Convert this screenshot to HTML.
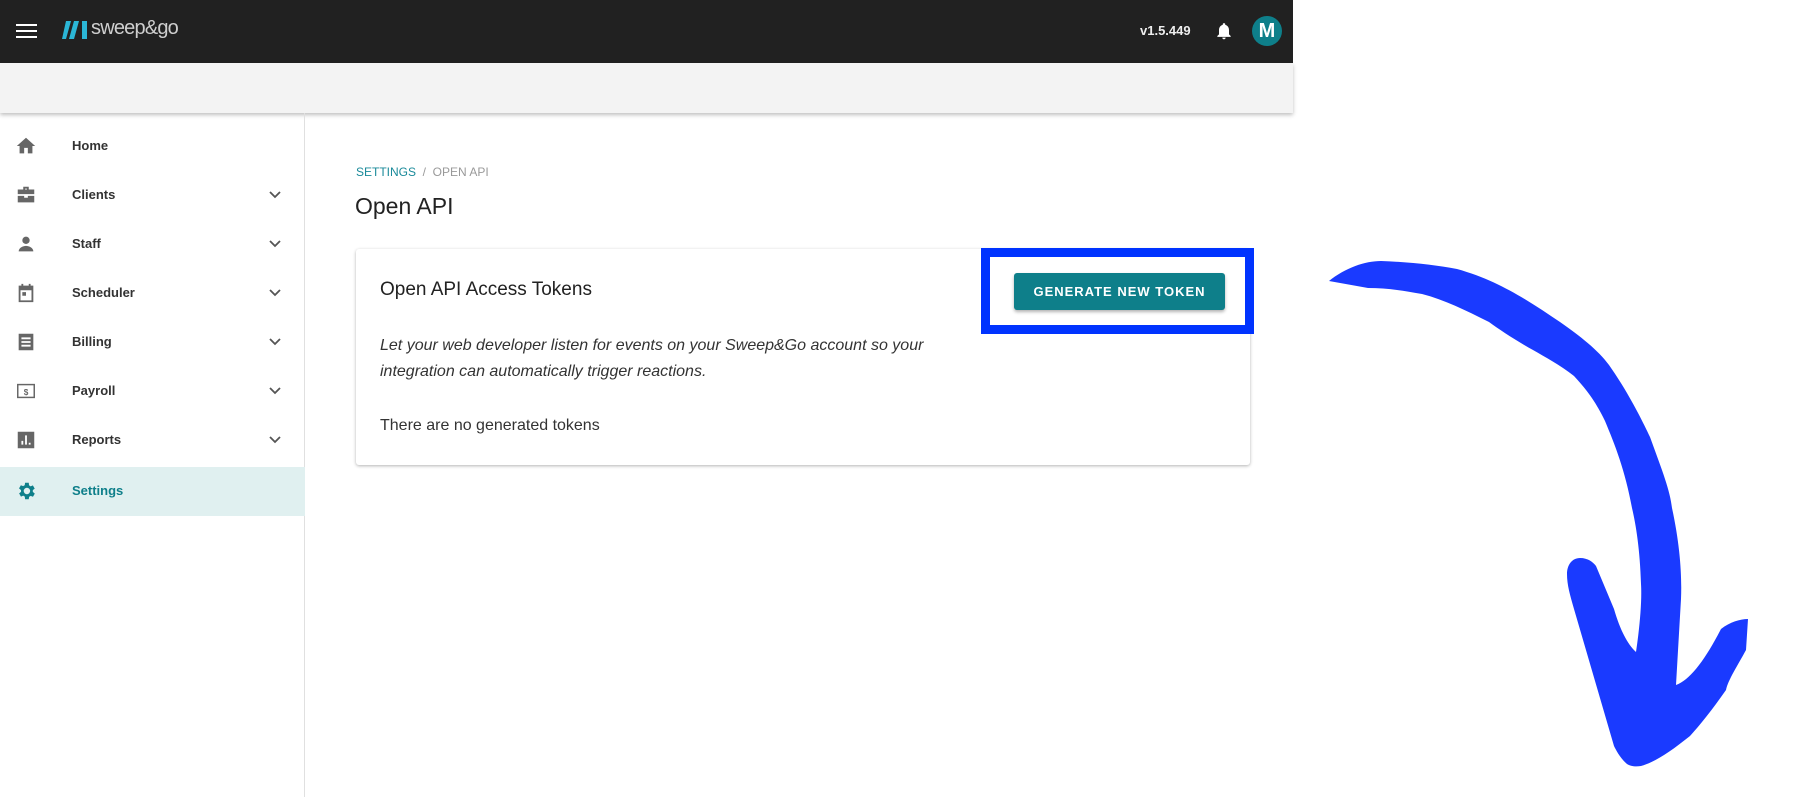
<!DOCTYPE html>
<html><head><meta charset="utf-8"><style>
*{box-sizing:border-box;margin:0;padding:0}
body{width:1800px;height:797px;background:#fff;font-family:"Liberation Sans",sans-serif;position:relative;overflow:hidden}
.top{position:absolute;left:0;top:0;width:1293px;height:63px;background:#212121}
.sub{position:absolute;left:0;top:63px;width:1293px;height:50px;background:#f3f3f3;box-shadow:0 2px 4px rgba(0,0,0,.25)}
.side{position:absolute;left:0;top:113px;width:305px;height:684px;border-right:1px solid #e0e0e0}
.item{position:absolute;left:0;width:305px;height:49px;font-size:13px;font-weight:bold;color:#333}
.item span{position:absolute;left:72px;top:16px}
.item svg.ic{position:absolute;left:15px;top:13px}
.item svg.ch{position:absolute;left:268px;top:17px}
.act{background:#e0f0f0;color:#0e7f8a}
</style></head><body>
<div class="top">
 <div style="position:absolute;left:16px;top:24px;width:21px;height:2px;background:#fff;box-shadow:0 6px 0 #fff,0 12px 0 #fff"></div>
 <svg style="position:absolute;left:62px;top:21px" width="26" height="18"><path d="M4 0h5l-5 18h-4zM12 0h5l-5 18h-5zM20 0h5v18h-5z" fill="#2bb6d6"/></svg>
 <div style="position:absolute;left:91px;top:17px;color:#cfcfcf;font-size:20px;letter-spacing:-.8px">sweep&amp;go</div>
 <div style="position:absolute;left:1140px;top:23px;color:#eee;font-size:13px;font-weight:bold">v1.5.449</div>
 <svg style="position:absolute;left:1214px;top:19px" width="20" height="24" viewBox="0 0 24 24"><path fill="#fff" d="M12 22c1.1 0 2-.9 2-2h-4a2 2 0 002 2zm6-6v-5c0-3.1-1.6-5.6-4.5-6.3V4a1.5 1.5 0 00-3 0v.7C7.6 5.4 6 7.9 6 11v5l-2 2v1h16v-1z"/></svg>
 <div style="position:absolute;left:1252px;top:16px;width:30px;height:30px;border-radius:50%;background:#0e7f8a;color:#fff;font-weight:bold;font-size:20px;text-align:center;line-height:30px">M</div>
</div>
<div class="sub"></div>
<div class="side">
 <div class="item" style="top:9px"><svg class="ic" width="22" height="22" viewBox="0 0 24 24"><path fill="#666" d="M10 20v-6h4v6h5v-8h3L12 3 2 12h3v8z"/></svg><span>Home</span></div>
 <div class="item" style="top:58px"><svg class="ic" width="22" height="22" viewBox="0 0 24 24"><path fill="#666" d="M9 3h6v3h6v5H3V6h6zm2 3h2V5h-2zM3 13h7v2h4v-2h7v7H3z"/></svg><span>Clients</span><svg class="ch" width="14" height="14" viewBox="0 0 14 14"><path d="M2 4l5 5 5-5" stroke="#555" stroke-width="1.8" fill="none"/></svg></div>
 <div class="item" style="top:107px"><svg class="ic" width="22" height="22" viewBox="0 0 24 24"><circle cx="12" cy="8" r="4" fill="#666"/><path fill="#666" d="M4 20c0-4 5-6 8-6s8 2 8 6z"/></svg><span>Staff</span><svg class="ch" width="14" height="14" viewBox="0 0 14 14"><path d="M2 4l5 5 5-5" stroke="#555" stroke-width="1.8" fill="none"/></svg></div>
 <div class="item" style="top:156px"><svg class="ic" width="22" height="22" viewBox="0 0 24 24"><path fill="#666" d="M4 4h3V2h2v2h6V2h2v2h3v18H4zm2 5v11h12V9zm2 2h4v4H8z"/></svg><span>Scheduler</span><svg class="ch" width="14" height="14" viewBox="0 0 14 14"><path d="M2 4l5 5 5-5" stroke="#555" stroke-width="1.8" fill="none"/></svg></div>
 <div class="item" style="top:205px"><svg class="ic" width="22" height="22" viewBox="0 0 24 24"><path fill="#666" d="M4 3h16v18H4zm3 4v2h10V7zm0 4v2h10v-2zm0 4v2h10v-2z"/></svg><span>Billing</span><svg class="ch" width="14" height="14" viewBox="0 0 14 14"><path d="M2 4l5 5 5-5" stroke="#555" stroke-width="1.8" fill="none"/></svg></div>
 <div class="item" style="top:254px"><svg class="ic" width="22" height="22" viewBox="0 0 24 24"><rect x="3" y="5" width="18" height="14" fill="none" stroke="#666" stroke-width="1.6"/><text x="12" y="16.5" font-size="9" font-weight="bold" text-anchor="middle" fill="#666" font-family="Liberation Sans">$</text></svg><span>Payroll</span><svg class="ch" width="14" height="14" viewBox="0 0 14 14"><path d="M2 4l5 5 5-5" stroke="#555" stroke-width="1.8" fill="none"/></svg></div>
 <div class="item" style="top:303px"><svg class="ic" width="22" height="22" viewBox="0 0 24 24"><path fill="#666" d="M3 3h18v18H3zm4 10v4h2v-4zm4-6v10h2V7zm4 8v2h2v-2z"/></svg><span>Reports</span><svg class="ch" width="14" height="14" viewBox="0 0 14 14"><path d="M2 4l5 5 5-5" stroke="#555" stroke-width="1.8" fill="none"/></svg></div>
 <div class="item act" style="top:354px"><svg class="ic" width="22" height="22" viewBox="0 0 24 24"><path fill="#0e7f8a" d="M19.4 13a7.5 7.5 0 000-2l2.1-1.6-2-3.5-2.5 1a7 7 0 00-1.7-1L15 3h-4l-.4 2.7a7 7 0 00-1.7 1l-2.5-1-2 3.5L6.6 11a7.5 7.5 0 000 2l-2.1 1.6 2 3.5 2.5-1a7 7 0 001.7 1L11 21h4l.4-2.7a7 7 0 001.7-1l2.5 1 2-3.5zM13 15.5a3.5 3.5 0 110-7 3.5 3.5 0 010 7z"/></svg><span>Settings</span></div>
</div>
<div style="position:absolute;left:356px;top:165px;font-size:12px;color:#999"><span style="color:#1a8a9a">SETTINGS</span> &nbsp;/&nbsp; OPEN API</div>
<div style="position:absolute;left:355px;top:193px;font-size:23px;color:#222">Open API</div>
<div style="position:absolute;left:356px;top:249px;width:894px;height:216px;background:#fff;border-radius:3px;box-shadow:0 1px 3px rgba(0,0,0,.3)">
 <div style="position:absolute;left:24px;top:30px;font-size:19px;color:#222">Open API Access Tokens</div>
 <div style="position:absolute;left:24px;top:84px;font-size:16px;font-style:italic;color:#333;line-height:26px;width:600px">Let your web developer listen for events on your Sweep&amp;Go account so your integration can automatically trigger reactions.</div>
 <div style="position:absolute;left:24px;top:168px;font-size:16px;color:#333">There are no generated tokens</div>
</div>
<div style="position:absolute;left:981px;top:248px;width:273px;height:86px;border:9px solid #0033ff"></div>
<div style="position:absolute;left:1014px;top:273px;width:211px;height:37px;background:#0e7f8a;border-radius:3px;box-shadow:0 2px 3px rgba(0,0,0,.3);color:#fff;font-size:13px;font-weight:bold;letter-spacing:1px;text-align:center;line-height:37px">GENERATE NEW TOKEN</div>
<svg style="position:absolute;left:0;top:0" width="1800" height="797">
<path fill="#1a3aff" d="M1329 281 C1345 268 1365 261 1381 261 C1410 262 1435 265 1457 269 C1500 281 1530 302 1560 322 C1580 336 1598 350 1609 365 C1628 392 1642 420 1650 437 C1662 470 1670 490 1672 508 C1680 545 1682 575 1681 599 L1676 685 C1690 680 1705 660 1721 629 C1730 622 1740 619 1748 619 L1746 650 C1738 665 1728 680 1726 690 C1712 710 1700 725 1690 736 C1670 752 1655 762 1641 766 C1635 767 1630 766 1627 764 C1620 758 1616 750 1614 746 L1574 609 C1570 595 1567 585 1567 574 C1567 565 1572 558 1580 558 C1588 558 1593 562 1596 566 L1614 609 C1620 630 1628 645 1636 652 C1640 625 1642 600 1641 584 C1640 550 1636 525 1632 508 C1625 470 1615 445 1605 421 C1595 400 1585 388 1574 376 C1560 365 1545 357 1533 350 C1515 340 1500 330 1489 322 C1465 310 1445 300 1422 294 C1400 290 1385 288 1368 288 Z"/>
</svg>
</body></html>
